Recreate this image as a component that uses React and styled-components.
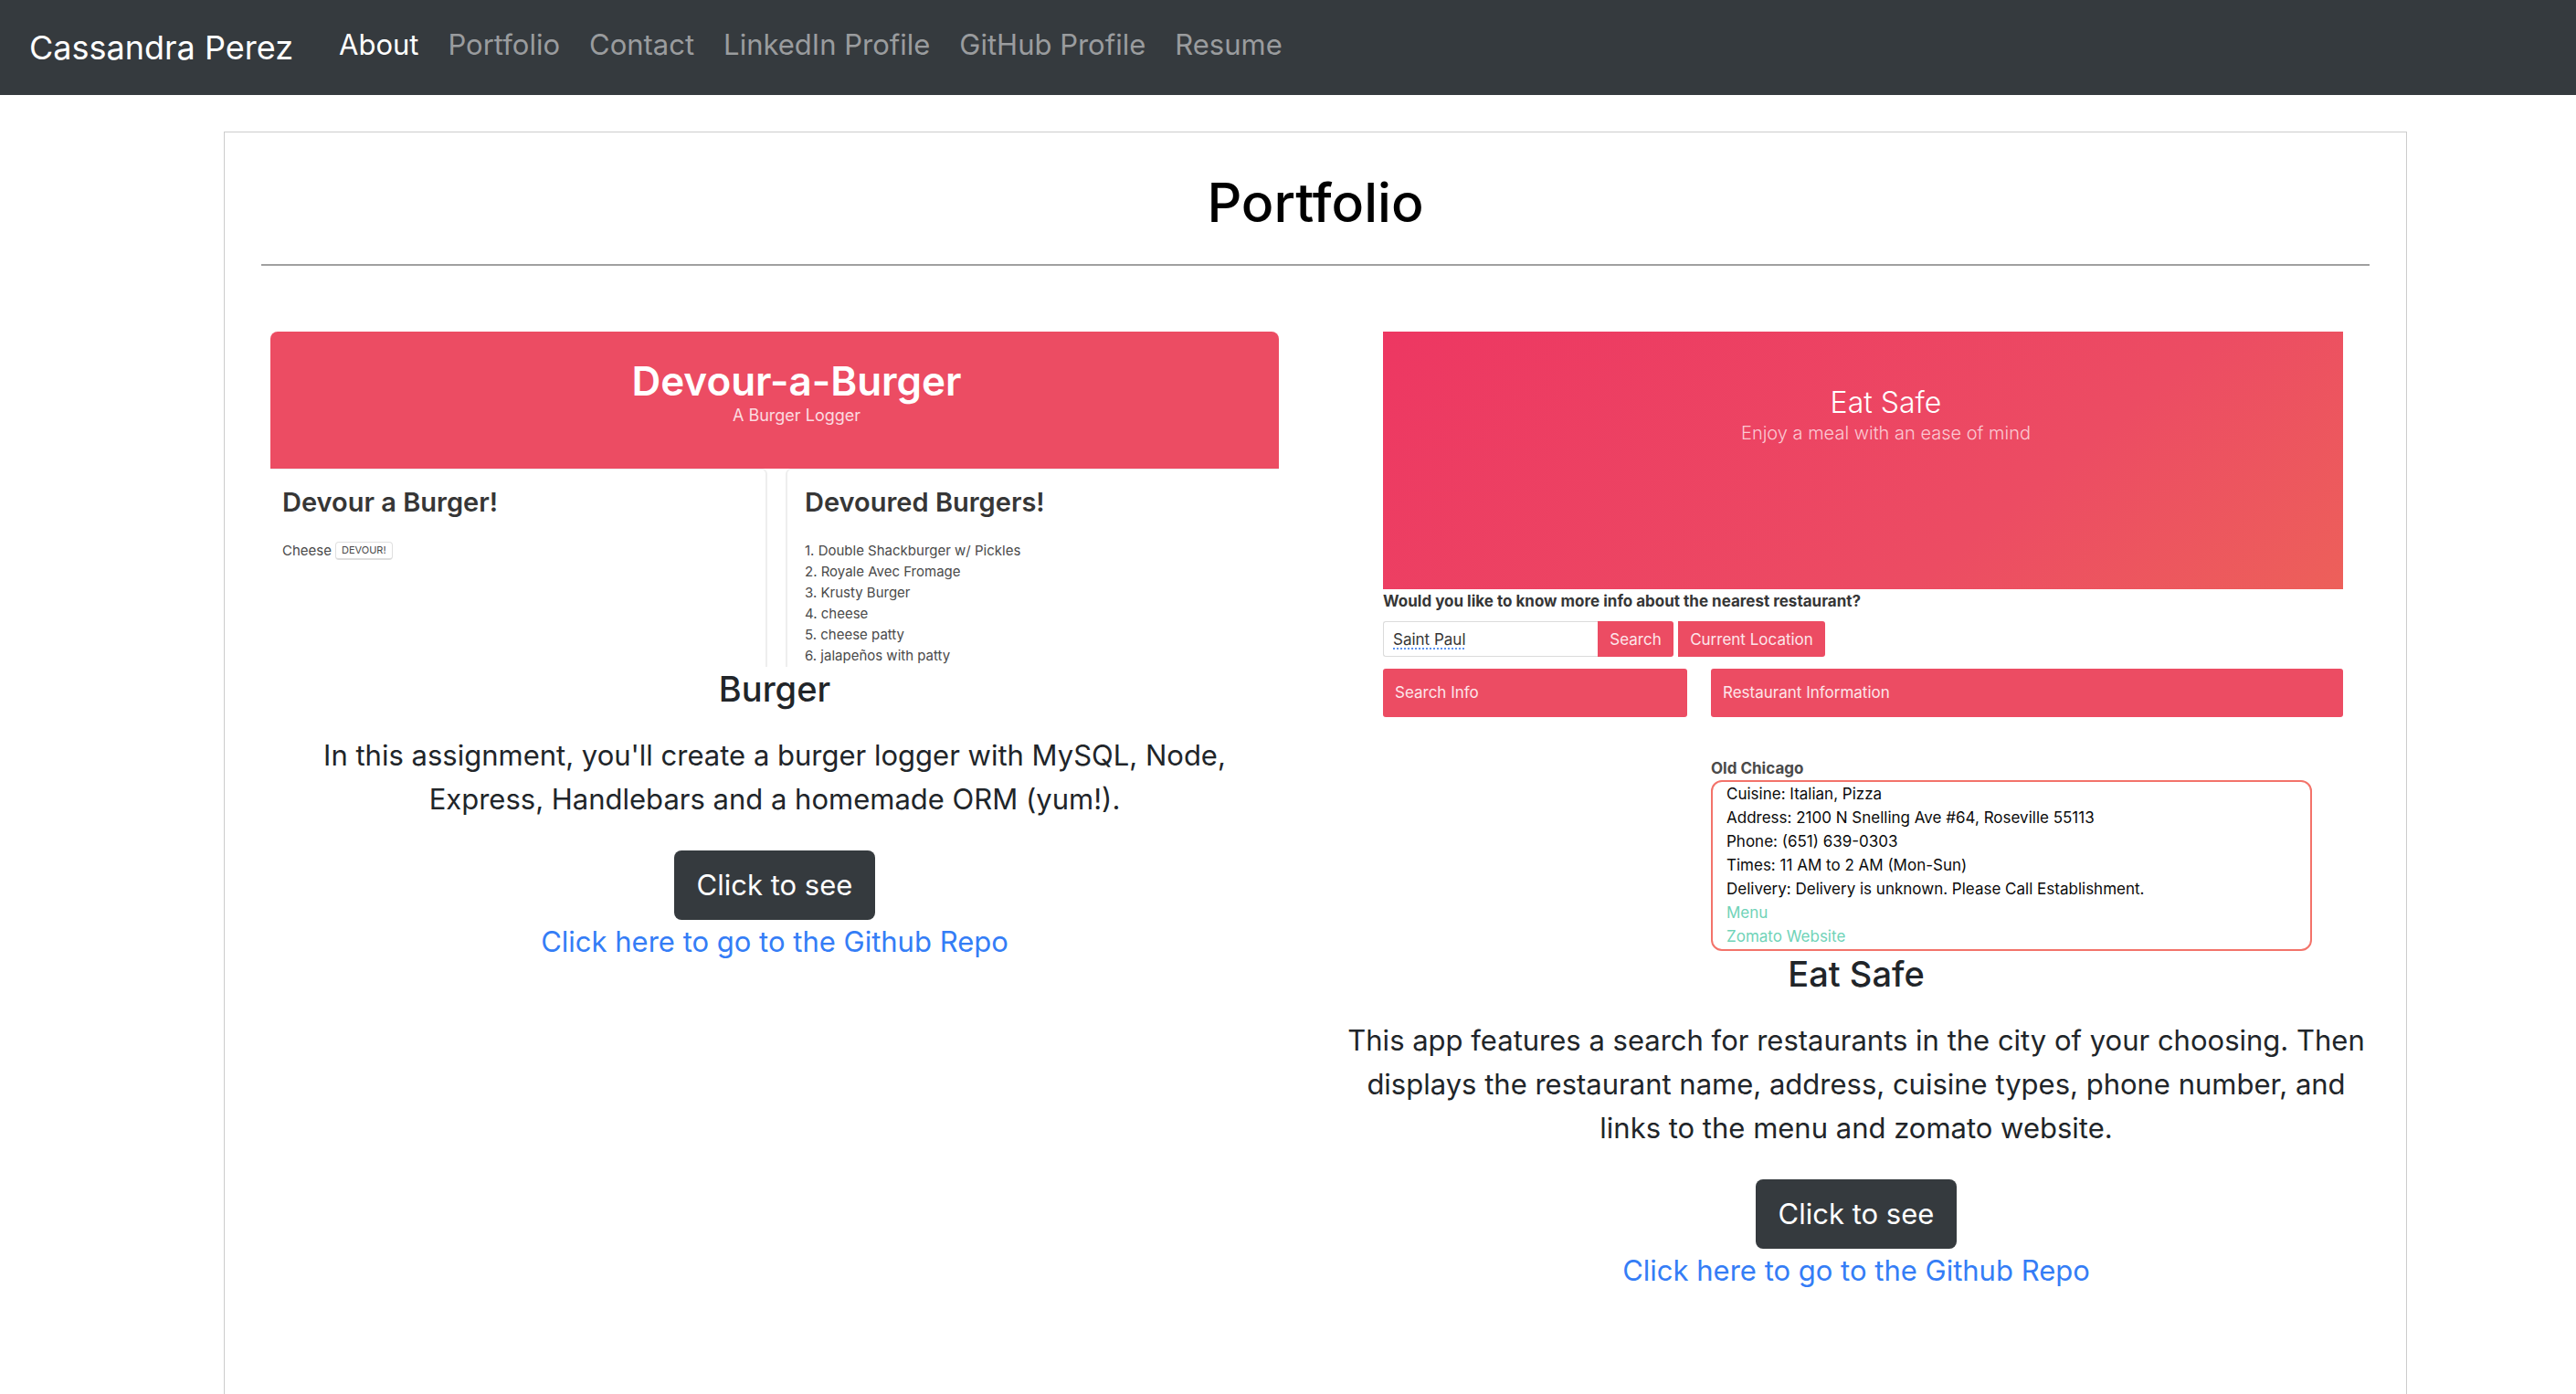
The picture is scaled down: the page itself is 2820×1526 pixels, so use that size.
import React from "react";
import styled, { createGlobalStyle } from "styled-components";

const GlobalStyle = createGlobalStyle`
  *, *::before, *::after { box-sizing: border-box; }
  body {
    margin: 0;
    background: #fff;
    color: #212529;
    font-family: Inter, "Liberation Sans", sans-serif;
    font-size: 31px;
    line-height: 48px;
  }
  h1, h2, h3, h4, p, ol { margin: 0; padding: 0; }
  a { text-decoration: none; }
  button, input { font: inherit; }
`;

const Page = styled.div`
  display: flex;
  flex-direction: column;
  min-height: 100vh;
`;

const Navbar = styled.nav`
  display: flex;
  align-items: center;
  height: 104px;
  padding: 0 32px;
  background: #353a3e;
`;

const Brand = styled.a`
  margin-right: 34px;
  color: #fff;
  font-size: 36px;
`;

const NavList = styled.div`
  display: flex;
  padding-bottom: 6px;
`;

const NavLink = styled.a`
  padding: 0 16px;
  color: ${(p) => (p.$active ? "#fff" : "#9a9c9e")};
`;

const Main = styled.main`
  flex: 1;
  margin: 40px 185px 0 245px;
  padding: 40px 40px 0;
  border: 1px solid #ccc;
  border-bottom: 0;
`;

const PageTitle = styled.h1`
  padding-bottom: 30px;
  border-bottom: 2px solid #a0a0a0;
  color: #000;
  font-size: 59px;
  font-weight: 500;
  line-height: 74px;
  text-align: center;
`;

const Projects = styled.div`
  display: grid;
  grid-template-columns: 1fr 1fr;
  align-items: start;
  margin: 72px -30px 0;
`;

const Project = styled.article`
  padding: 0 40px;
  text-align: center;
`;

const ProjectTitle = styled.h2`
  font-size: 38px;
  font-weight: 500;
  line-height: 48px;
`;

const Description = styled.p`
  margin: 0 -8px;
  padding: 25px 0 32px;
`;

const DemoButton = styled.button`
  display: block;
  height: 76px;
  margin: 0 auto;
  padding: 0 25px;
  border: 0;
  border-radius: 8px;
  background: #353a3e;
  color: #fff;
`;

const RepoLink = styled.a`
  display: block;
  color: #347df6;
`;

/* Preview of the burger logger */

const BurgerPreview = styled.div`
  height: 367px;
  overflow: hidden;
  color: #4a4a4a;
  font-size: 15px;
  line-height: 23px;
  text-align: left;
`;

const BurgerHero = styled.header`
  height: 150px;
  padding: 24px 0 0 48px;
  border-radius: 8px 8px 0 0;
  background: #ec4c63;
  color: #fff;
  text-align: center;
`;

const BurgerName = styled.h3`
  font-size: 44px;
  font-weight: 600;
  line-height: 60px;
`;

const BurgerTag = styled.p`
  color: #fbdbe0;
  font-size: 18px;
  line-height: 16px;
`;

const Tiles = styled.div`
  display: grid;
  grid-template-columns: 544px 1fr;
  gap: 20px;
  height: 217px;
`;

const Tile = styled.section`
  padding: 20px 0 0 ${(p) => (p.$side === "left" ? "13px" : "19px")};
  border-top: 1px solid #eee;
  border-${(p) => (p.$side === "left" ? "right" : "left")}: 2px solid #eee;
  border-radius: ${(p) => (p.$side === "left" ? "0 6px 0 0" : "6px 0 0 0")};
`;

const TileTitle = styled.h4`
  padding-bottom: 25px;
  color: #363636;
  font-size: 29px;
  font-weight: 600;
  line-height: 32px;
`;

const BurgerList = styled.ol`
  list-style: none;
`;

const BurgerRow = styled.div`
  display: flex;
  align-items: center;
  gap: 4px;
`;

const DevourButton = styled.button`
  height: 20px;
  padding: 0 6px;
  border: 1px solid #e0e0e0;
  border-bottom: 2px solid #ddd;
  border-radius: 4px;
  background: #fff;
  color: #4a4a4a;
  font-size: 11px;
  line-height: 17px;
`;

/* Preview of the restaurant finder */

const EatPreview = styled.div`
  height: 679px;
  padding: 0 19px 0 34px;
  color: #363636;
  font-size: 17px;
  line-height: 26px;
  text-align: left;
`;

const EatHero = styled.header`
  height: 282px;
  padding: 56px 0 0 50px;
  background: linear-gradient(141deg, #ed3762 0%, #ec4c63 66%, #ed605a 100%);
  color: #fff;
  text-align: center;
`;

const EatName = styled.h3`
  font-size: 32px;
  font-weight: 300;
  line-height: 44px;
`;

const EatTag = styled.p`
  color: #fbc9d3;
  font-size: 20px;
  font-weight: 300;
  line-height: 22px;
`;

const Question = styled.label`
  display: block;
  padding-bottom: 9px;
  font-weight: 700;
`;

const SearchBar = styled.form`
  display: flex;
  height: 39px;
`;

const CityInput = styled.input`
  width: 235px;
  padding: 0 10px;
  border: 1px solid #dbdbdb;
  border-right: 0;
  border-radius: 3px 0 0 3px;
  background: #fff;
  color: #363636;
  text-decoration: underline dotted #5b93f0 2px;
  text-underline-offset: 4px;
`;

const SearchButton = styled.button`
  width: ${(p) => p.$width};
  margin-right: 5px;
  padding: 0;
  border: 0;
  border-radius: 0 3px 3px 0;
  background: #ec4c63;
  color: #fde6ea;
`;

const Results = styled.div`
  display: grid;
  grid-template-columns: 333px 1fr;
  column-gap: 26px;
  padding-top: 13px;
`;

const ResultHeading = styled.h4`
  padding: 0 13px;
  border-radius: 3px;
  background: #ec4c63;
  color: #fde6ea;
  font-weight: 400;
  line-height: 53px;
`;

const Restaurant = styled.section`
  grid-column: 2;
  padding: 43px 34px 0 0;
`;

const RestaurantName = styled.h4`
  color: #4a4a4a;
  font-weight: 700;
`;

const RestaurantCard = styled.div`
  padding: 0 15px 1px;
  border: 2px solid #f3736a;
  border-radius: 12px;
  color: #0a0a0a;
`;

const CardLink = styled.a`
  display: block;
  color: #6fd3b8;
`;

const navItems = ["About", "Portfolio", "Contact", "LinkedIn Profile", "GitHub Profile", "Resume"];

const devoured = [
  "Double Shackburger w/ Pickles",
  "Royale Avec Fromage",
  "Krusty Burger",
  "cheese",
  "cheese patty",
  "jalapeños with patty",
];

const details = [
  "Cuisine: Italian, Pizza",
  "Address: 2100 N Snelling Ave #64, Roseville 55113",
  "Phone: (651) 639-0303",
  "Times: 11 AM to 2 AM (Mon-Sun)",
  "Delivery: Delivery is unknown. Please Call Establishment.",
];

function Burger() {
  return (
    <BurgerPreview>
      <BurgerHero>
        <BurgerName>Devour-a-Burger</BurgerName>
        <BurgerTag>A Burger Logger</BurgerTag>
      </BurgerHero>
      <Tiles>
        <Tile $side="left">
          <TileTitle>Devour a Burger!</TileTitle>
          <BurgerRow>
            <span>Cheese</span>
            <DevourButton type="button">DEVOUR!</DevourButton>
          </BurgerRow>
        </Tile>
        <Tile $side="right">
          <TileTitle>Devoured Burgers!</TileTitle>
          <BurgerList>
            {devoured.map((name, i) => (
              <li key={name}>{`${i + 1}. ${name}`}</li>
            ))}
          </BurgerList>
        </Tile>
      </Tiles>
    </BurgerPreview>
  );
}

function EatSafe() {
  return (
    <EatPreview>
      <EatHero>
        <EatName>Eat Safe</EatName>
        <EatTag>Enjoy a meal with an ease of mind</EatTag>
      </EatHero>
      <Question htmlFor="city">Would you like to know more info about the nearest restaurant?</Question>
      <SearchBar onSubmit={(e) => e.preventDefault()}>
        <CityInput id="city" defaultValue="Saint Paul" />
        <SearchButton type="submit" $width="83px">Search</SearchButton>
        <SearchButton type="button" $width="161px">Current Location</SearchButton>
      </SearchBar>
      <Results>
        <ResultHeading>Search Info</ResultHeading>
        <ResultHeading>Restaurant Information</ResultHeading>
        <Restaurant>
          <RestaurantName>Old Chicago</RestaurantName>
          <RestaurantCard>
            {details.map((line) => (
              <p key={line}>{line}</p>
            ))}
            <CardLink href="#menu">Menu</CardLink>
            <CardLink href="#zomato">Zomato Website</CardLink>
          </RestaurantCard>
        </Restaurant>
      </Results>
    </EatPreview>
  );
}

const projects = [
  {
    title: "Burger",
    Preview: Burger,
    text: "In this assignment, you'll create a burger logger with MySQL, Node, Express, Handlebars and a homemade ORM (yum!).",
  },
  {
    title: "Eat Safe",
    Preview: EatSafe,
    text: "This app features a search for restaurants in the city of your choosing. Then displays the restaurant name, address, cuisine types, phone number, and links to the menu and zomato website.",
  },
];

export default function App() {
  return (
    <Page>
      <GlobalStyle />
      <Navbar>
        <Brand href="#home">Cassandra Perez</Brand>
        <NavList>
          {navItems.map((item, i) => (
            <NavLink key={item} href="#" $active={i === 0}>{item}</NavLink>
          ))}
        </NavList>
      </Navbar>
      <Main>
        <PageTitle>Portfolio</PageTitle>
        <Projects>
          {projects.map(({ title, Preview, text }) => (
            <Project key={title}>
              <Preview />
              <ProjectTitle>{title}</ProjectTitle>
              <Description>{text}</Description>
              <DemoButton type="button">Click to see</DemoButton>
              <RepoLink href="#repo">Click here to go to the Github Repo</RepoLink>
            </Project>
          ))}
        </Projects>
      </Main>
    </Page>
  );
}
